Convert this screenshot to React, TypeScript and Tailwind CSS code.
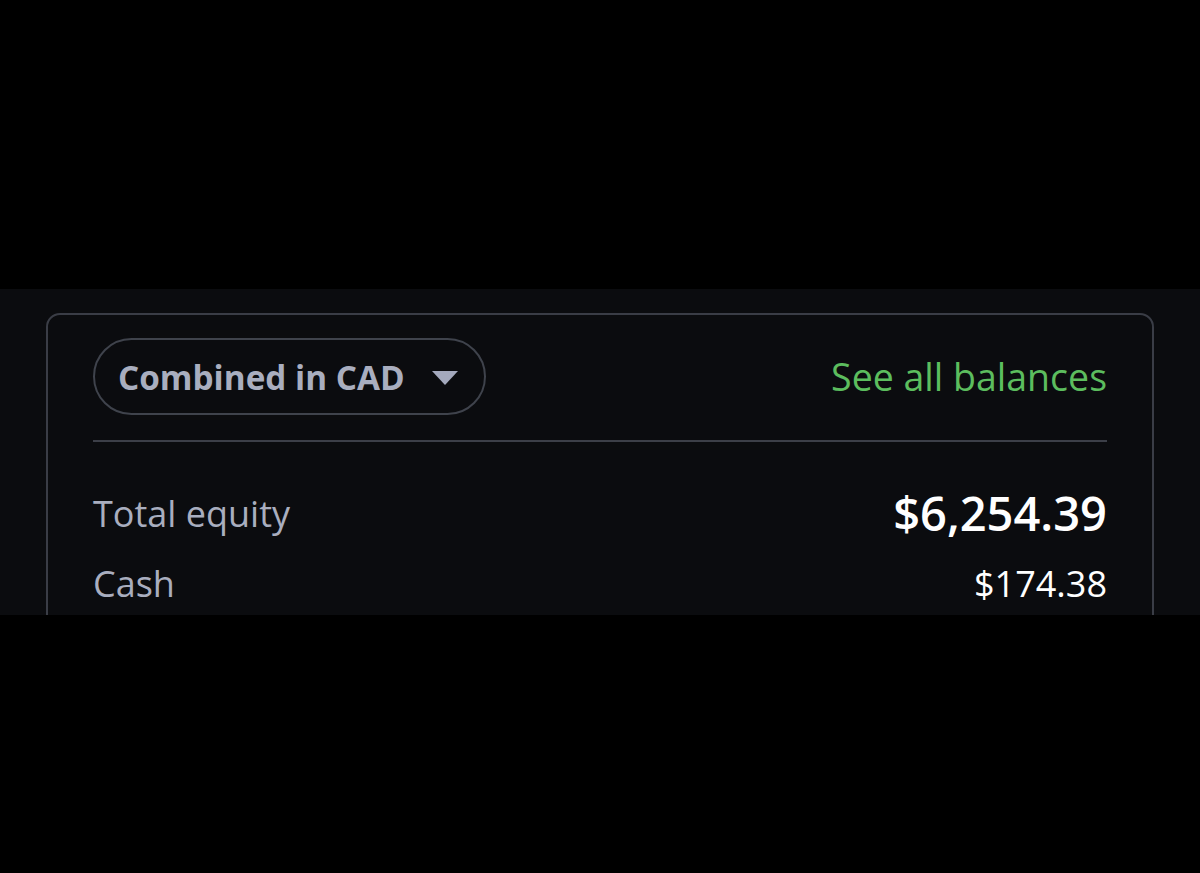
import React from "react";

export default function App() {
  return (
    <div className="w-[1200px] h-[873px] bg-black flex flex-col overflow-hidden" style={{ fontFamily: '"Open Sans", "Noto Sans", sans-serif' }}>
      <div className="h-[289px] shrink-0" />
      <div className="h-[326px] shrink-0 bg-[#0b0c0f] overflow-hidden px-[46px] pt-[24px]">
        <div className="h-[400px] border-2 border-[#3a3d46] rounded-[14px] px-[45px] pt-[23px]">
          <div className="flex items-center justify-between">
            <button className="h-[77px] w-[393px] rounded-full border-2 border-[#3f434c] flex items-center pl-[23px] gap-[27px]">
              <span className="text-[33.3px] font-bold text-[#a9aebf] leading-none mt-[2px]">Combined in CAD</span>
              <svg width="26" height="14" viewBox="0 0 26 14" className="mt-[2px]">
                <polygon points="0,0 26,0 13,14" fill="#a4a9bd" />
              </svg>
            </button>
            <span className="text-[37.5px] text-[#5cbd5e] leading-none">See all balances</span>
          </div>
          <div className="h-[2px] bg-[#3c3f48] mt-[25px]" />
          <div className="flex items-center justify-between mt-[48px]">
            <span className="text-[36px] text-[#a9aebf] leading-none">Total equity</span>
            <span className="text-[47px] font-semibold text-white leading-none">$6,254.39</span>
          </div>
          <div className="flex items-center justify-between mt-[29px]">
            <span className="text-[36px] text-[#a9aebf] leading-none">Cash</span>
            <span className="text-[36px] text-white leading-none">$174.38</span>
          </div>
        </div>
      </div>
    </div>
  );
}
